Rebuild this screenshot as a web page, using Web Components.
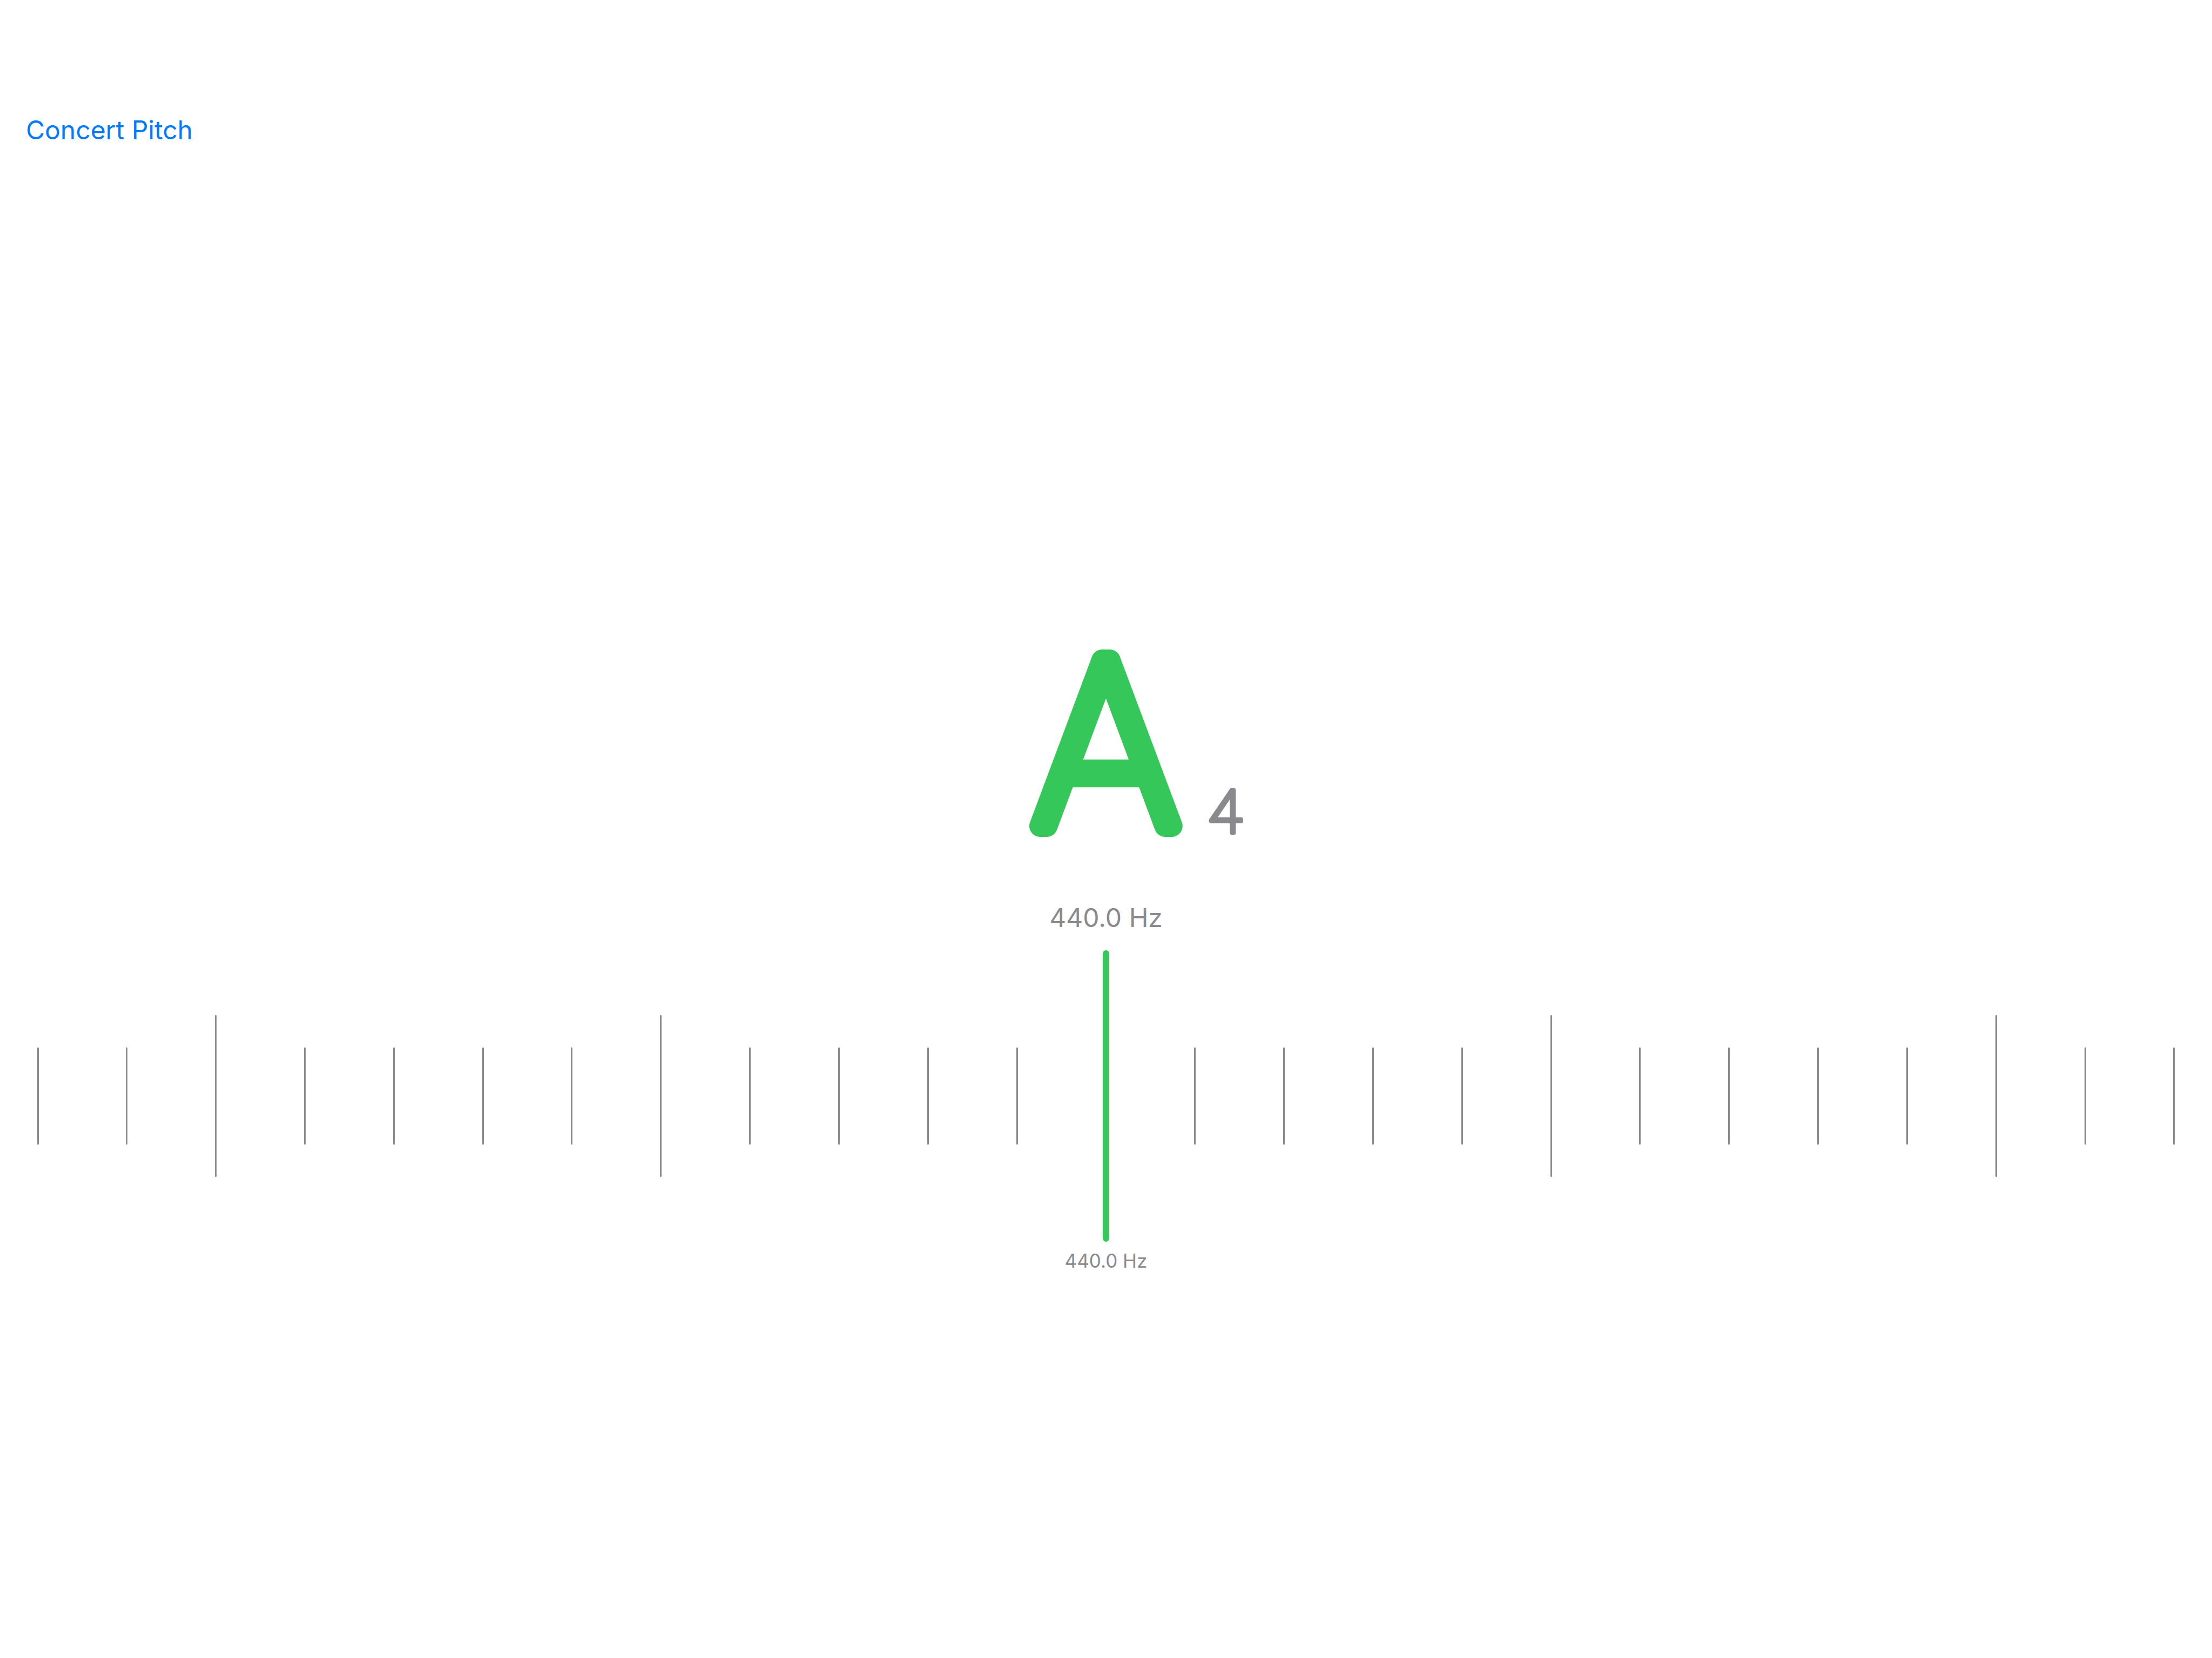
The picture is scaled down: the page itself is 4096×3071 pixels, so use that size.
<!DOCTYPE html>
<html lang="en">
<head>
<meta charset="utf-8">
<meta name="viewport" content="width=device-width, initial-scale=1">
<title>Tuner</title>
<style>
  html, body { margin: 0; height: 100%; }
  body {
    --tint: #007aff;
    --in-tune: #35c759;
    --secondary: #8a8a8e;
    background: #fff;
    font-family: Inter, "Liberation Sans", sans-serif;
  }
</style>
</head>
<body>
<tuner-app></tuner-app>

<template id="tuner-app">
  <style>
    :host { display: flex; flex-direction: column; min-height: 100vh; }
    header { display: flex; padding: 211px 48px 0; }
    main { flex: 1; display: flex; flex-direction: column; }
    main::before { content: ""; flex: 17; }
    main::after { content: ""; flex: 13; }
    tuner-frequency.current { margin: 120px 0 30px; }
    tuner-frequency.target { margin-top: 12px; }
  </style>
  <header><tuner-link-button>Concert Pitch</tuner-link-button></header>
  <main>
    <tuner-note note="A" octave="4"></tuner-note>
    <tuner-frequency class="current">440.0 Hz</tuner-frequency>
    <tuner-scale></tuner-scale>
    <tuner-frequency class="target" small>440.0 Hz</tuner-frequency>
  </main>
</template>

<template id="tuner-link-button">
  <style>
    :host { display: block; }
    button {
      display: block; margin: 0; padding: 0; border: 0; background: none;
      color: var(--tint); font: 400 48px/60px Inter, "Liberation Sans", sans-serif;
      cursor: pointer;
    }
  </style>
  <button type="button"><slot></slot></button>
</template>

<template id="tuner-frequency">
  <style>
    :host { display: block; text-align: center; color: var(--secondary); font-size: 48px; line-height: 60px; }
    :host([small]) { font-size: 35px; line-height: 46px; }
  </style>
  <slot></slot>
</template>

<template id="tuner-note">
  <style>
    :host {
      display: grid; grid-template-columns: 1fr auto 1fr;
      column-gap: 38px; align-items: end;
    }
    svg { display: block; overflow: visible; }
    .note { grid-column: 2; width: 296px; height: 347px; }
    .octave { width: 70px; height: 90px; }
    text { text-anchor: middle; stroke-linejoin: round; font-family: Roboto, "Liberation Sans", sans-serif; font-weight: 100; }
    .note text { font-size: 432px; fill: var(--in-tune); stroke: var(--in-tune); stroke-width: 40px; }
    .octave text { font-size: 112px; fill: var(--secondary); stroke: var(--secondary); stroke-width: 8px; }
  </style>
  <svg class="note" viewBox="0 0 296 347"><text x="148" y="327"></text></svg>
  <svg class="octave" viewBox="0 0 70 90"><text x="35" y="83"></text></svg>
</template>

<template id="tuner-scale">
  <style>
    :host { display: flex; justify-content: space-between; align-items: center; padding: 0 64px; }
  </style>
</template>

<template id="tuner-tick">
  <style>
    :host { display: flex; justify-content: center; width: 12px; }
    i { display: block; width: 3px; height: 180px; border-radius: 2px; background: var(--secondary); }
    :host([kind="major"]) i { height: 300px; }
    :host([kind="needle"]) i { width: 12px; height: 540px; border-radius: 6px; background: var(--in-tune); }
  </style>
  <i></i>
</template>

<script>
  class TemplateElement extends HTMLElement {
    constructor() {
      super();
      this.attachShadow({ mode: "open" });
      this.shadowRoot.append(document.getElementById(this.localName).content.cloneNode(true));
    }
  }

  class TunerLinkButton extends TemplateElement {}
  class TunerFrequency extends TemplateElement {}
  class TunerTick extends TemplateElement {}

  class TunerNote extends TemplateElement {
    connectedCallback() {
      this.shadowRoot.querySelector(".note text").textContent = this.getAttribute("note");
      this.shadowRoot.querySelector(".octave text").textContent = this.getAttribute("octave");
    }
  }

  // Twelve ticks each side of the needle, a major one at every fifth.
  class TunerScale extends TemplateElement {
    connectedCallback() {
      for (let step = -12; step <= 12; step++) {
        const tick = document.createElement("tuner-tick");
        tick.setAttribute("kind", step === 0 ? "needle" : step % 5 === 0 ? "major" : "minor");
        this.shadowRoot.append(tick);
      }
    }
  }

  class TunerApp extends TemplateElement {}

  customElements.define("tuner-link-button", TunerLinkButton);
  customElements.define("tuner-frequency", TunerFrequency);
  customElements.define("tuner-tick", TunerTick);
  customElements.define("tuner-note", TunerNote);
  customElements.define("tuner-scale", TunerScale);
  customElements.define("tuner-app", TunerApp);
</script>
</body>
</html>
